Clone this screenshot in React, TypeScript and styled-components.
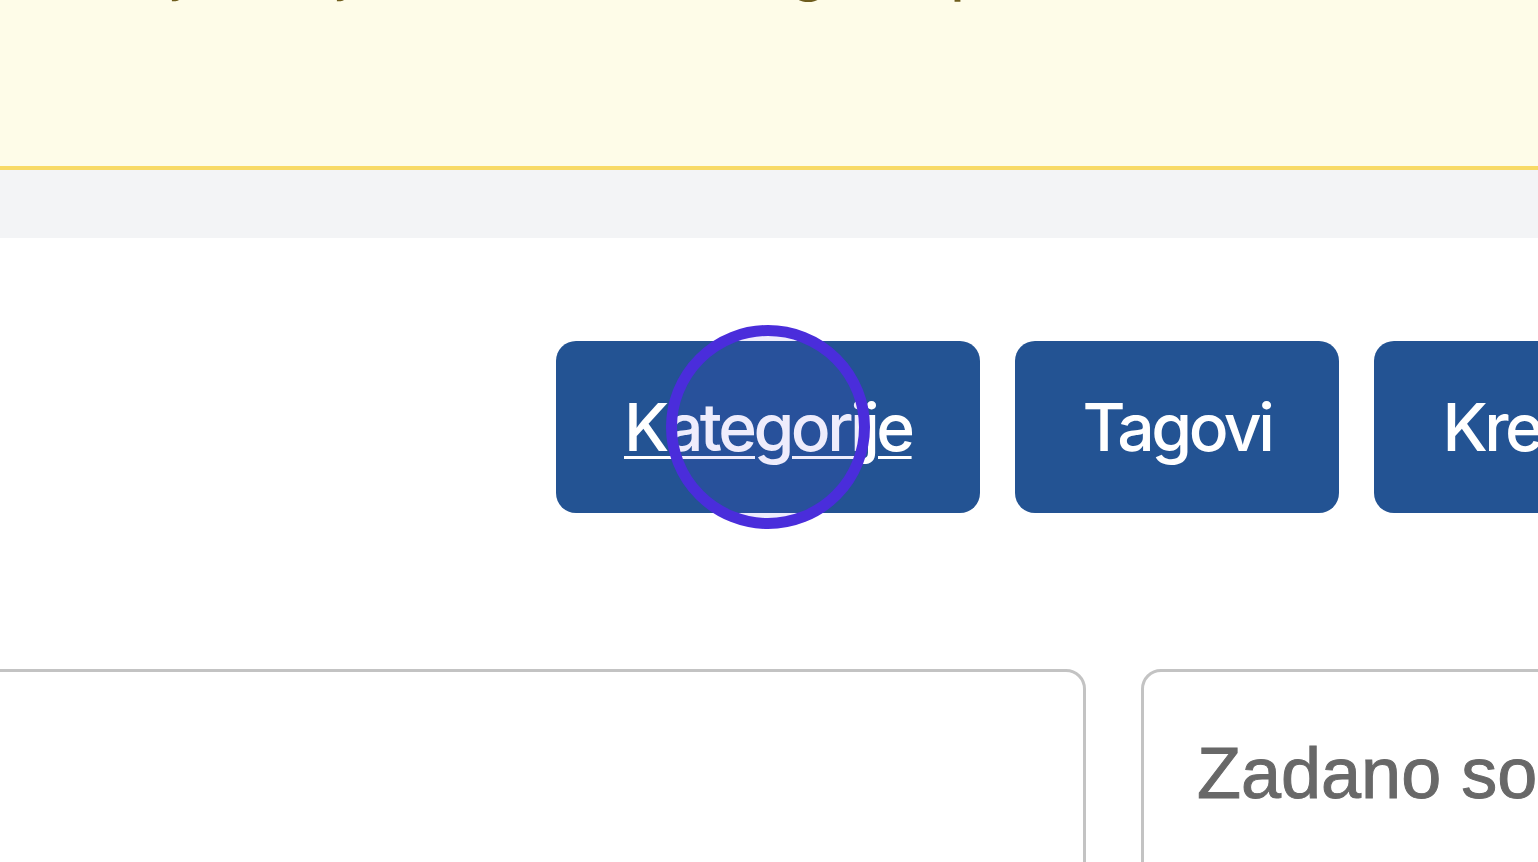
import React from "react";
import styled, { createGlobalStyle } from "styled-components";

const GlobalStyle = createGlobalStyle`
  html, body {
    margin: 0;
    padding: 0;
    background: #fff;
    overflow: hidden;
  }
  body {
    font-family: Inter, "Noto Sans", "Liberation Sans", sans-serif;
  }
`;

const Page = styled.div`
  width: 1538px;
  height: 862px;
  overflow: hidden;
  background: #fff;
`;

// warning banner, only the bottom of its text line is still on screen
const Notice = styled.div`
  height: 166px;
  background: #fefce8;
  border-bottom: 4px solid #f8da66;
  overflow: hidden;
`;

const NoticeText = styled.p`
  margin: -76px 0 0 0;
  padding-left: 46px;
  font-size: 66px;
  line-height: 80px;
  color: #6e5c1c;
  white-space: nowrap;
`;

const Strip = styled.div`
  height: 68px;
  background: #f3f4f6;
`;

const Toolbar = styled.div`
  display: flex;
  gap: 35px;
  padding: 103px 0 0 556px;
  white-space: nowrap;
`;

const ActionButton = styled.a<{ $active?: boolean }>`
  position: relative;
  display: flex;
  align-items: center;
  flex-shrink: 0;
  height: 172px;
  padding: 0 68px;
  box-sizing: border-box;
  border-radius: 20px;
  background: #235393;
  color: #fff;
  font-size: 66px;
  font-weight: 500;
  letter-spacing: -3.5px;
  text-decoration: ${(p) => (p.$active ? "underline" : "none")};
  text-decoration-thickness: 3px;
  text-underline-offset: 5px;
  cursor: pointer;
`;

const ClickRing = styled.span`
  position: absolute;
  left: 110px;
  top: -16px;
  width: 204px;
  height: 204px;
  box-sizing: border-box;
  border-radius: 50%;
  border: 11px solid #4a2ddb;
  background: rgba(90, 70, 230, 0.1);
  pointer-events: none;
`;

const Filters = styled.div`
  display: flex;
  gap: 55px;
  margin-top: 156px;
  margin-left: -20px;
`;

const Field = styled.div<{ $width: number }>`
  flex-shrink: 0;
  width: ${(p) => p.$width}px;
  height: 230px;
  box-sizing: border-box;
  border: 3px solid #c3c3c3;
  border-radius: 20px;
  background: #fff;
  display: flex;
  align-items: center;
  padding: 0 0 22px 53px;
  font-family: "Liberation Sans", Arial, sans-serif;
  font-size: 72px;
  color: #686868;
  -webkit-text-stroke: 1px #686868;
  white-space: nowrap;
`;

export default function App() {
  return (
    <Page>
      <GlobalStyle />
      <Notice>
        <NoticeText>Ovdje uvijek sve urediti gore prikazane stavke na stranici.</NoticeText>
      </Notice>
      <Strip />
      <Toolbar>
        <ActionButton $active>
          Kategorije
          <ClickRing />
        </ActionButton>
        <ActionButton>Tagovi</ActionButton>
        <ActionButton>Kreiraj novi</ActionButton>
      </Toolbar>
      <Filters>
        <Field $width={1106} />
        <Field $width={600}>Zadano sortiranje</Field>
      </Filters>
    </Page>
  );
}
